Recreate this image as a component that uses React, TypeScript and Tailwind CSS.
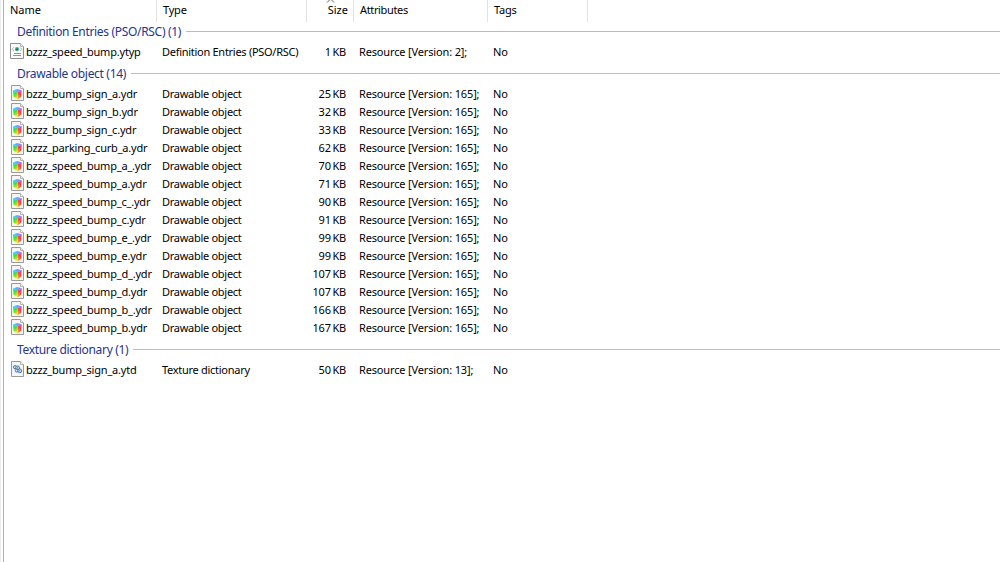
import React from 'react';

type IconKind = 'ytyp' | 'ydr' | 'ytd';

interface FileEntry {
  name: string;
  size: number;
}

interface FileGroup {
  type: string;
  icon: IconKind;
  version: number;
  files: FileEntry[];
}

const GROUPS: FileGroup[] = [
  {
    type: 'Definition Entries (PSO/RSC)',
    icon: 'ytyp',
    version: 2,
    files: [{ name: 'bzzz_speed_bump.ytyp', size: 1 }],
  },
  {
    type: 'Drawable object',
    icon: 'ydr',
    version: 165,
    files: [
      { name: 'bzzz_bump_sign_a.ydr', size: 25 },
      { name: 'bzzz_bump_sign_b.ydr', size: 32 },
      { name: 'bzzz_bump_sign_c.ydr', size: 33 },
      { name: 'bzzz_parking_curb_a.ydr', size: 62 },
      { name: 'bzzz_speed_bump_a_.ydr', size: 70 },
      { name: 'bzzz_speed_bump_a.ydr', size: 71 },
      { name: 'bzzz_speed_bump_c_.ydr', size: 90 },
      { name: 'bzzz_speed_bump_c.ydr', size: 91 },
      { name: 'bzzz_speed_bump_e_.ydr', size: 99 },
      { name: 'bzzz_speed_bump_e.ydr', size: 99 },
      { name: 'bzzz_speed_bump_d_.ydr', size: 107 },
      { name: 'bzzz_speed_bump_d.ydr', size: 107 },
      { name: 'bzzz_speed_bump_b_.ydr', size: 166 },
      { name: 'bzzz_speed_bump_b.ydr', size: 167 },
    ],
  },
  {
    type: 'Texture dictionary',
    icon: 'ytd',
    version: 13,
    files: [{ name: 'bzzz_bump_sign_a.ytd', size: 50 }],
  },
];

const YtypIcon: React.FC = () => (
  <svg width="14" height="16" viewBox="0 0 14 16" className="mr-px shrink-0">
    <path d="M.5.5h10l3 3v12H.5z" fill="#fcfcfc" stroke="#8f8f8f" />
    <path d="M10.5.5v3h3" fill="#fff" stroke="#b5b5b5" />
    <path d="M3.6 4.6 2.1 6.2l1.5 1.7M10.4 4.6l1.5 1.6-1.5 1.7" fill="none" stroke="#6b7f94" strokeDasharray="1 .6" />
    <circle cx="7" cy="6.2" r="2.1" fill="#45b294" />
    <circle cx="7" cy="6.2" r="1" fill="#1f6b64" />
    <path d="M4 10.5h7M3 12.5h8" stroke="#8d9494" />
  </svg>
);

const PageIcon: React.FC<{ children: React.ReactNode }> = ({ children }) => (
  <svg width="13" height="16" viewBox="0 0 13 16" className="ml-px mr-px shrink-0">
    <path d="M.5.5h9l3 3v12H.5z" fill="#f5f5f5" stroke="#999" />
    <path d="M9.5.5v3h3" fill="#fff" stroke="#b5b5b5" />
    {children}
  </svg>
);

const YdrIcon: React.FC = () => (
  <PageIcon>
    <defs>
      <linearGradient id="cubeTop" x1="0" x2="1">
        <stop offset="0" stopColor="#2fe0f0" />
        <stop offset=".6" stopColor="#6f9bff" />
        <stop offset="1" stopColor="#c45cff" />
      </linearGradient>
      <linearGradient id="cubeLeft" x1="0" y1="0" x2=".5" y2="1">
        <stop offset="0" stopColor="#1fd8e8" />
        <stop offset=".5" stopColor="#3de43a" />
        <stop offset="1" stopColor="#f4e81c" />
      </linearGradient>
      <linearGradient id="cubeRight" x1="1" y1="0" x2=".3" y2="1">
        <stop offset="0" stopColor="#e94df0" />
        <stop offset=".5" stopColor="#ff3c50" />
        <stop offset="1" stopColor="#ffa51c" />
      </linearGradient>
    </defs>
    <path d="M2 5.6 6 4l4.8 1.3L6.8 7.2z" fill="url(#cubeTop)" />
    <path d="M2 5.6 6.8 7.2v7L2.6 11.8z" fill="url(#cubeLeft)" />
    <path d="m6.8 7.2 4-1.9-.5 6.3-3.5 2.6z" fill="url(#cubeRight)" />
  </PageIcon>
);

const YtdIcon: React.FC = () => (
  <PageIcon>
    <g fill="#dbe8f2" stroke="#4477a3">
      <circle cx="4" cy="6.2" r="1.6" />
      <circle cx="6.6" cy="6.8" r="1.9" />
      <circle cx="5.8" cy="9.6" r="1.5" />
      <circle cx="8.8" cy="9.8" r="1.9" />
    </g>
    <circle cx="6.6" cy="6.8" r=".6" fill="#2f5f8c" />
    <circle cx="8.8" cy="9.8" r=".6" fill="#2f5f8c" />
  </PageIcon>
);

const ICONS: Record<IconKind, React.FC> = {
  ytyp: YtypIcon,
  ydr: YdrIcon,
  ytd: YtdIcon,
};

const HeaderRow: React.FC = () => (
  <div className="flex h-[22px] text-black leading-[20px]">
    <div className="w-[153px] pl-1.5 border-r border-[#e2e2e2]">Name</div>
    <div className="w-[150px] pl-1.5 border-r border-[#e2e2e2] tracking-[-0.2px]">Type</div>
    <div className="relative w-[47px] pr-[5px] border-r border-[#e2e2e2] text-right">
      <svg width="9" height="4" viewBox="0 0 9 4" className="absolute left-[19px] top-[-1px]">
        <path d="M1 3.5 4.5 0 8 3.5" fill="none" stroke="#606060" />
      </svg>
      Size
    </div>
    <div className="w-[134px] pl-1.5 border-r border-[#e2e2e2] tracking-[-0.35px]">Attributes</div>
    <div className="w-[100px] pl-1.5 border-r border-[#e2e2e2] tracking-[-0.2px]">Tags</div>
  </div>
);

const GroupHeader: React.FC<{ label: string; count: number }> = ({ label, count }) => (
  <div className="flex h-6 items-center pl-[13px] pt-0.5 text-[12px] text-[#26348f] tracking-[-0.32px]">
    <span>{label} ({count})</span>
    <span className="ml-[5px] -mt-px h-px grow bg-[#b0bcda]" />
  </div>
);

const FileRow: React.FC<{ file: FileEntry; group: FileGroup }> = ({ file, group }) => {
  const Icon = ICONS[group.icon];
  return (
    <div className="flex h-[18px] items-center text-black">
      <div className="flex w-[158px] items-center pl-1.5">
        <span className="flex w-4 -mt-0.5">
          <Icon />
        </span>
        <span className="tracking-[-0.2px]">{file.name}</span>
      </div>
      <div className="w-[140px] tracking-[-0.28px]">{group.type}</div>
      <div className="w-[44px] text-right tracking-[-0.2px] [word-spacing:-1px]">{file.size} KB</div>
      <div className="w-[134px] pl-[13px] tracking-[-0.15px]">Resource [Version: {group.version}];</div>
      <div className="pl-[13px] tracking-[-0.2px]">No</div>
    </div>
  );
};

export default function App() {
  return (
    <div className="flex h-[562px] w-[1000px] overflow-hidden bg-white font-['Noto_Sans','DejaVu_Sans',sans-serif] text-[11px] whitespace-nowrap">
      <div className="flex w-1 shrink-0 border-r border-[#a3b3c4]">
        <div className="w-px bg-[#ececec]" />
      </div>
      <main className="grow">
        <HeaderRow />
        <div className="-mt-[3px]">
          {GROUPS.map((group) => (
            <section key={group.type}>
              <GroupHeader label={group.type} count={group.files.length} />
              {group.files.map((file) => (
                <FileRow key={file.name} file={file} group={group} />
              ))}
            </section>
          ))}
        </div>
      </main>
    </div>
  );
}
